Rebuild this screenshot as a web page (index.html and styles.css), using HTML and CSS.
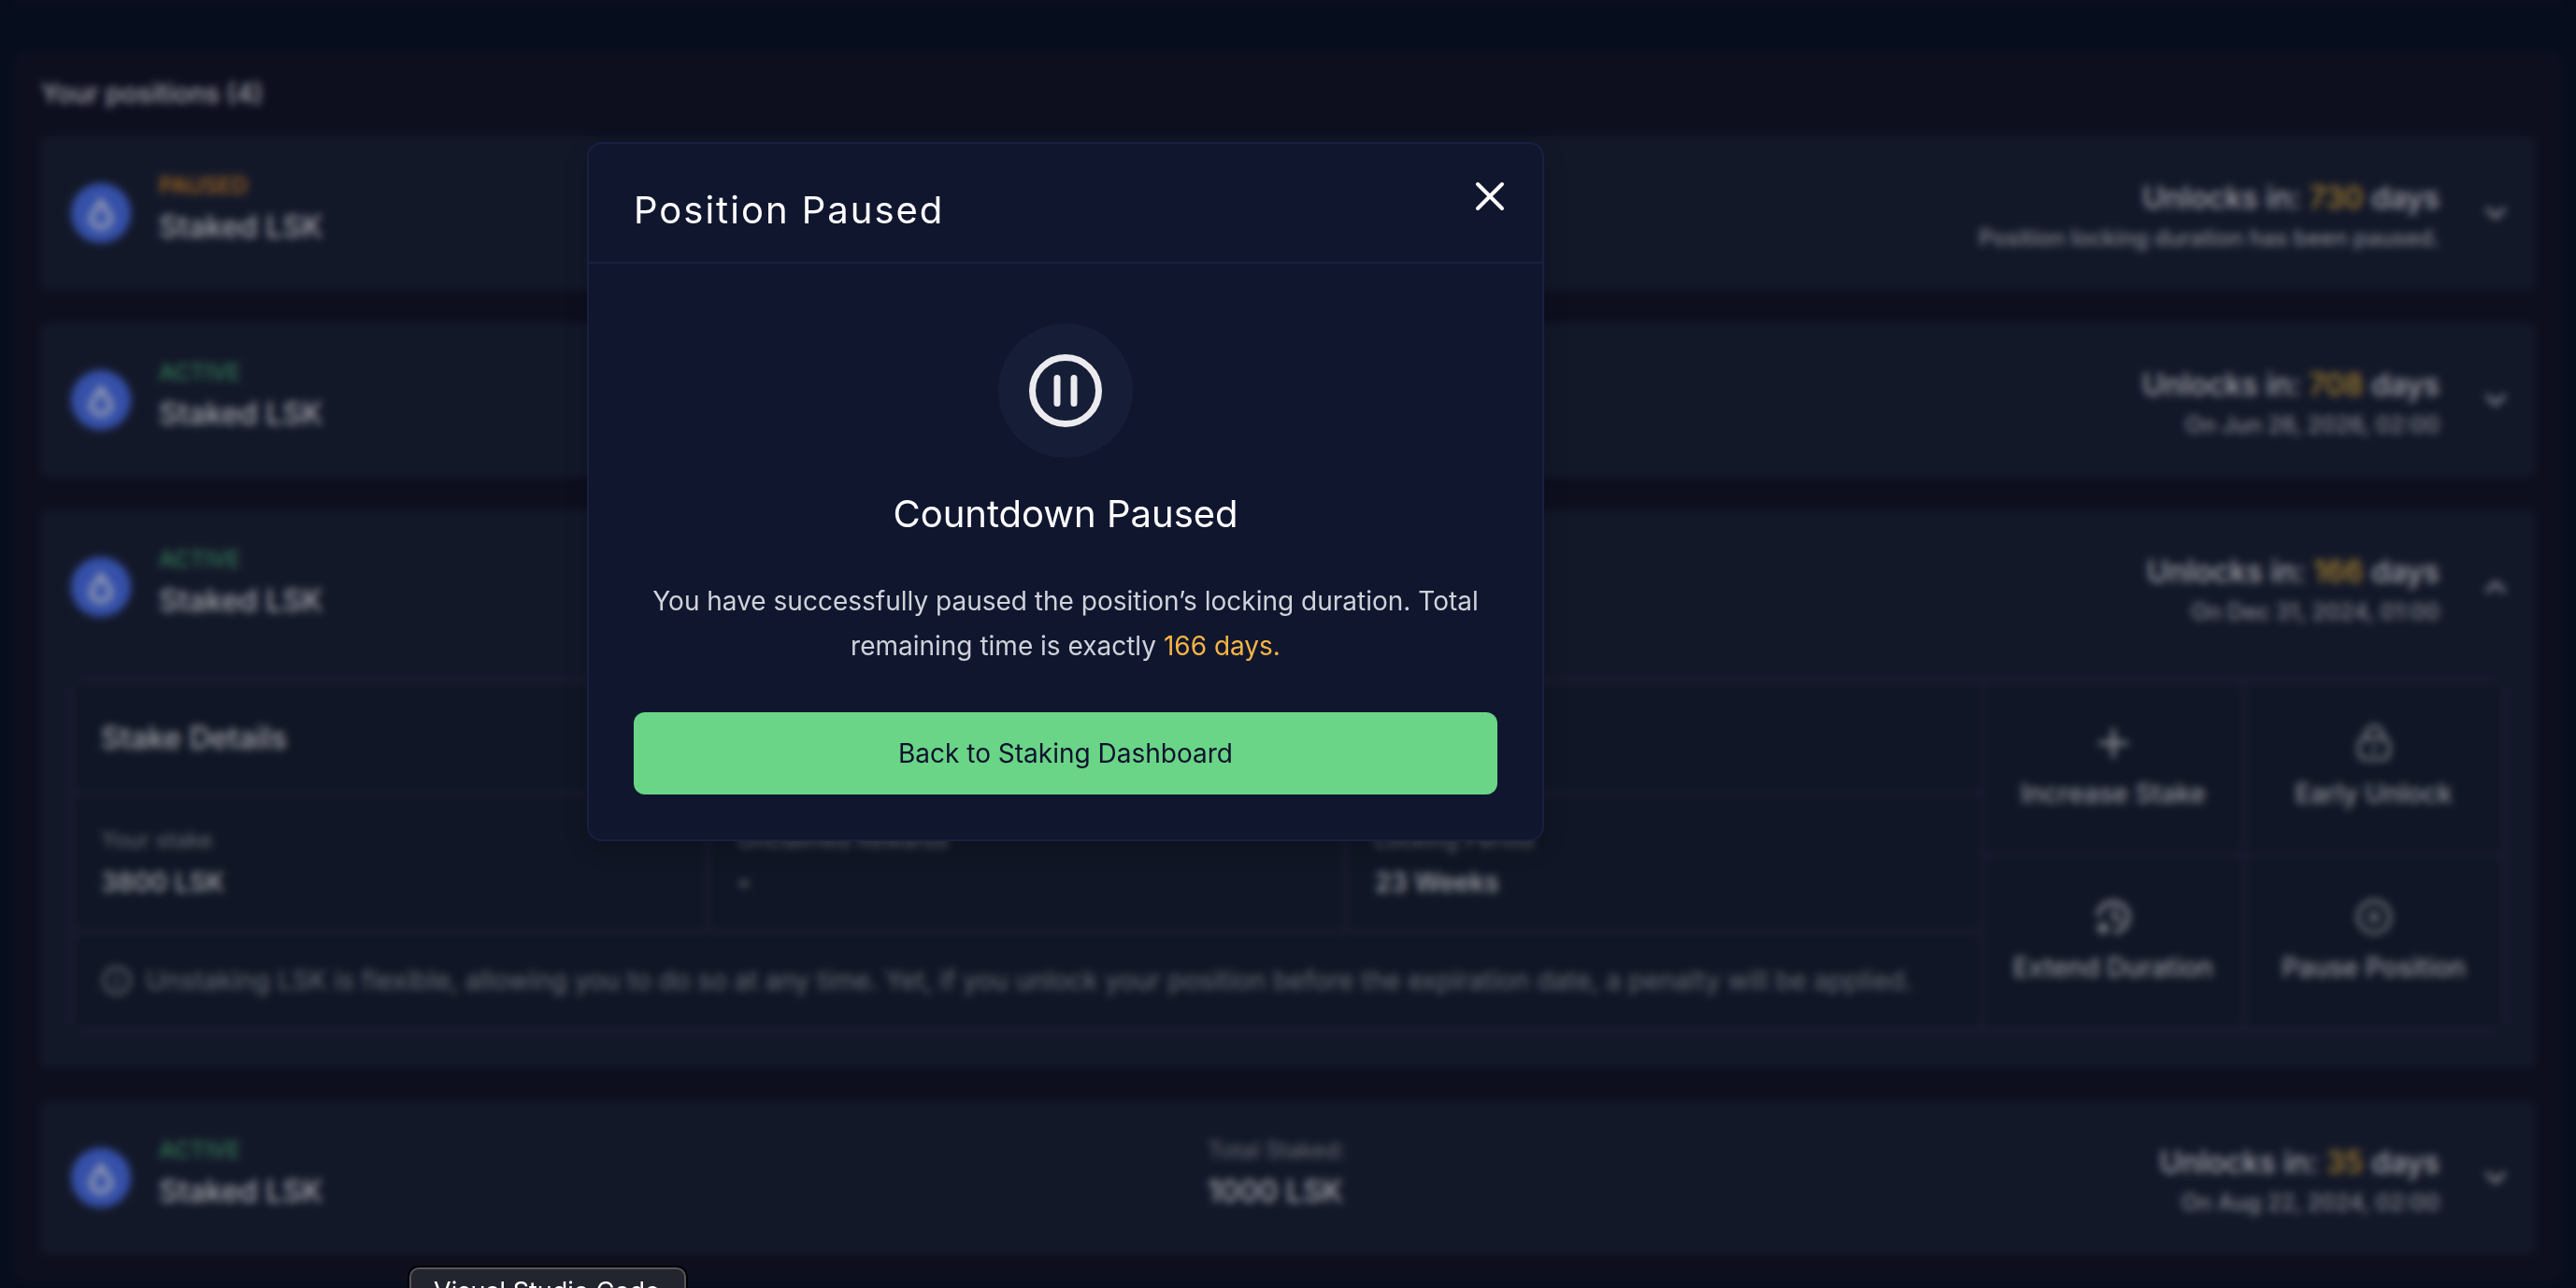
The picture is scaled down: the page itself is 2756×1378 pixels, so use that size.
FILE: index.html
```
<!DOCTYPE html>
<html lang="en">
<head>
<meta charset="utf-8">
<meta name="viewport" content="width=device-width, initial-scale=1">
<title>Staking Dashboard</title>
<link rel="stylesheet" href="styles.css">
</head>
<body>
<svg class="sprite" aria-hidden="true">
  <symbol id="drop" viewBox="0 0 66 66"><circle cx="33" cy="33" r="33" fill="#3550a8"/><path d="M33 20 L42 34 C46 41 41 48.500 33 48.500 C25 48.500 20 41 24 34 Z" fill="none" stroke="#9199b4" stroke-width="6" stroke-linejoin="round"/></symbol>
  <symbol id="chevron" viewBox="0 0 32 32"><path d="M7 11.500 L16 20.500 L25 11.500" fill="none" stroke="currentColor" stroke-width="3.500" stroke-linecap="round" stroke-linejoin="round"/></symbol>
  <symbol id="pause" viewBox="0 0 40 40"><g fill="none" stroke="currentColor" stroke-width="3" stroke-linecap="round"><circle cx="20" cy="20" r="17"/><path d="M17 15v10M23 15v10"/></g></symbol>
</svg>

<main class="page">
  <div class="previous-panel"></div>
  <section class="panel">
    <h1 class="panel-title">Your positions (4)</h1>
    <div class="cards">
      <article class="card">
        <div class="summary">
          <div class="asset"><svg class="token"><use href="#drop"/></svg>
            <div><p class="status paused">PAUSED</p><p class="name">Staked LSK</p></div></div>
          <div class="total"><p class="label">Total Staked:</p><p class="name">1000 LSK</p></div>
          <div class="unlock"><p class="unlock-in">Unlocks in: <span class="days">730</span> days</p><p class="unlock-on">Position locking duration has been paused.</p></div>
          <button class="toggle" type="button" aria-label="Expand"><svg><use href="#chevron"/></svg></button>
        </div>
      </article>
      <article class="card">
        <div class="summary">
          <div class="asset"><svg class="token"><use href="#drop"/></svg>
            <div><p class="status active">ACTIVE</p><p class="name">Staked LSK</p></div></div>
          <div class="total"><p class="label">Total Staked:</p><p class="name">1000 LSK</p></div>
          <div class="unlock"><p class="unlock-in">Unlocks in: <span class="days">708</span> days</p><p class="unlock-on">On Jun 26, 2026, 02:00</p></div>
          <button class="toggle" type="button" aria-label="Expand"><svg><use href="#chevron"/></svg></button>
        </div>
      </article>
      <article class="card expanded">
        <div class="summary">
          <div class="asset"><svg class="token"><use href="#drop"/></svg>
            <div><p class="status active">ACTIVE</p><p class="name">Staked LSK</p></div></div>
          <div class="total"><p class="label">Total Staked:</p><p class="name">3800 LSK</p></div>
          <div class="unlock"><p class="unlock-in">Unlocks in: <span class="days">166</span> days</p><p class="unlock-on">On Dec 31, 2024, 01:00</p></div>
          <button class="toggle open" type="button" aria-label="Collapse"><svg><use href="#chevron"/></svg></button>
        </div>
        <div class="details">
          <div class="facts">
            <h2 class="facts-title">Stake Details</h2>
            <div class="fact"><p class="fact-label">Your stake</p><p class="fact-value">3800 LSK</p></div>
            <div class="fact"><p class="fact-label">Unclaimed Rewards</p><p class="fact-value">-</p></div>
            <div class="fact"><p class="fact-label">Locking Period</p><p class="fact-value">23 Weeks</p></div>
            <p class="note"><svg viewBox="0 0 34 34" fill="none" stroke="currentColor" stroke-width="3" stroke-linecap="round"><circle cx="17" cy="17" r="14"/><path d="M17 16v7M17 11v1"/></svg>Unstaking LSK is flexible, allowing you to do so at any time. Yet, if you unlock your position before the expiration date, a penalty will be applied.</p>
          </div>
          <div class="actions">
            <button class="action" type="button"><svg viewBox="0 0 40 40" fill="none" stroke="currentColor" stroke-width="4" stroke-linecap="round"><path d="M20 6v28M6 20h28"/></svg>Increase Stake</button>
            <button class="action" type="button"><svg viewBox="0 0 40 40" fill="none" stroke="currentColor" stroke-width="3" stroke-linecap="round"><path d="M10 15h20a6 6 0 0 1 6 6v10a6 6 0 0 1-6 6H10a6 6 0 0 1-6-6V21a6 6 0 0 1 6-6zM11 15v-4a9 9 0 0 1 18 0v4M20 23v6"/></svg>Early Unlock</button>
            <button class="action" type="button"><svg viewBox="0 0 40 40" fill="none" stroke="currentColor" stroke-width="4" stroke-linecap="round"><path d="M4 18a16 16 0 1 1 18 18M21 12v9l6 3M9 27v10M4 32h10"/></svg>Extend Duration</button>
            <button class="action" type="button"><svg><use href="#pause"/></svg>Pause Position</button>
          </div>
        </div>
      </article>
      <article class="card">
        <div class="summary">
          <div class="asset"><svg class="token"><use href="#drop"/></svg>
            <div><p class="status active">ACTIVE</p><p class="name">Staked LSK</p></div></div>
          <div class="total"><p class="label">Total Staked:</p><p class="name">1000 LSK</p></div>
          <div class="unlock"><p class="unlock-in">Unlocks in: <span class="days">35</span> days</p><p class="unlock-on">On Aug 22, 2024, 02:00</p></div>
          <button class="toggle" type="button" aria-label="Expand"><svg><use href="#chevron"/></svg></button>
        </div>
      </article>
    </div>
  </section>
</main>

<div class="overlay">
  <div class="modal" role="dialog" aria-modal="true" aria-labelledby="modal-title">
    <header class="modal-header">
      <h2 class="modal-title" id="modal-title">Position Paused</h2>
      <button class="close" type="button" aria-label="Close"><svg viewBox="0 0 32 32" fill="none" stroke="currentColor" stroke-width="4" stroke-linecap="round"><path d="M3 3l26 26M29 3L3 29"/></svg></button>
    </header>
    <div class="modal-body">
      <div class="badge"><svg viewBox="0 0 80 80" fill="none" stroke="currentColor" stroke-width="7" stroke-linecap="round"><circle cx="40" cy="40" r="35.500"/><path d="M31 26.500v27M49 26.500v27"/></svg></div>
      <h3 class="modal-heading">Countdown Paused</h3>
      <p class="modal-text">You have successfully paused the position’s locking duration. Total remaining time is exactly <span class="highlight">166 days.</span></p>
      <button class="primary" type="button">Back to Staking Dashboard</button>
    </div>
  </div>
</div>
<div class="dock-tip" role="tooltip">Visual Studio Code</div>
</body>
</html>
```

FILE: styles.css
```
* { box-sizing: border-box; }
body, h1, h2, h3, p { margin: 0; }
body {
  background: #060d1c;
  color: #a4a5ab;
  font-family: Inter, "Liberation Sans", sans-serif;
  font-size: 28px;
  overflow: hidden;
}
button {
  border: 0;
  padding: 0;
  background: none;
  color: inherit;
  font: inherit;
  cursor: pointer;
}
svg { display: block; flex: none; }
.sprite { display: none; }

/* Dashboard */
.page { padding: 0 16px 8px; }
.previous-panel { height: 4px; margin-bottom: 52px; background: #100f20; }
.panel {
  padding: 26px;
  border: 2px solid #151526;
  border-radius: 16px;
  background: #0d0f1f;
}
.panel-title { margin-bottom: 30px; font-size: 28px; font-weight: 500; line-height: 32px; }
.cards { display: grid; gap: 36px; }
.card { padding: 0 32px; border-radius: 8px; background: #131829; }
.card.expanded { padding-bottom: 40px; }
.summary {
  display: grid;
  grid-template-columns: 1216fr 600fr 720fr 68px;
  align-items: center;
  min-height: 164px;
}
.asset { display: flex; align-items: center; gap: 30px; }
.token { width: 64px; height: 64px; }
.status, .label { font-size: 24px; line-height: 30px; }
.status { font-weight: 500; }
.paused { color: #a96a20; }
.active { color: #347a55; }
.label { color: #686b75; }
.name { font-size: 32px; font-weight: 500; line-height: 58px; }
.unlock { padding-right: 2px; text-align: right; white-space: nowrap; }
.unlock-in { font-size: 32px; font-weight: 500; line-height: 54px; }
.unlock-on { color: #858790; font-size: 24px; font-weight: 500; line-height: 32px; }
.days { color: #a6802f; }
.toggle { justify-self: end; margin-right: -6px; color: #92939a; }
.toggle svg { width: 32px; height: 32px; }
.toggle.open svg { transform: rotate(180deg); }

.details {
  display: grid;
  grid-template-columns: 2044fr 556fr;
  gap: 2px;
  margin-top: 18px;
  padding: 2px;
  border-radius: 12px;
  overflow: hidden;
  background: #271f3c;
}
.facts {
  display: grid;
  grid-template: 118px 146px 102px / repeat(3, 1fr);
  gap: 2px;
}
.facts > *, .action { background: #101625; }
.facts-title, .note { grid-column: 1 / -1; display: flex; align-items: center; padding: 0 30px; }
.facts-title { font-size: 32px; font-weight: 500; }
.fact { padding: 28px 30px; }
.fact-label { color: #686b75; font-size: 24px; line-height: 42px; }
.fact-value { font-size: 28px; font-weight: 500; line-height: 48px; }
.note { gap: 14px; color: #686b75; }
.note svg { width: 34px; height: 34px; }
.actions { display: grid; grid-template-columns: 1fr 1fr; gap: 2px; }
.action {
  display: flex;
  flex-direction: column;
  align-items: center;
  justify-content: center;
  gap: 14px;
  color: #92939a;
  font-weight: 500;
  line-height: 40px;
}
.action svg { width: 40px; height: 40px; }

/* Dialog */
.overlay {
  position: fixed;
  inset: 0;
  display: flex;
  justify-content: center;
  align-items: flex-start;
  padding: 152px 476px 0 0;
  backdrop-filter: blur(4px);
}
.modal {
  width: 1024px;
  max-width: 100%;
  border: 2px solid #192040;
  border-radius: 16px;
  background: #11162f;
  box-shadow: 0 8px 24px #00000030;
}
.modal-header {
  display: flex;
  justify-content: space-between;
  align-items: flex-start;
  padding: 47px 40px 31px 48px;
  border-bottom: 2px solid #192040;
  color: #fff;
}
.modal-title { font-size: 40px; font-weight: 400; line-height: 48px; letter-spacing: 2px; }
.close { margin-top: -7px; }
.close svg { width: 32px; height: 32px; }
.modal-body { padding: 64px 48px 48px; text-align: center; }
.badge {
  display: flex;
  align-items: center;
  justify-content: center;
  width: 144px;
  height: 144px;
  margin: 0 auto 32px;
  border-radius: 50%;
  background: #161d36;
  color: #ebebef;
}
.badge svg { width: 80px; height: 80px; }
.modal-heading { margin-bottom: 41px; color: #fff; font-size: 40px; font-weight: 400; line-height: 56px; }
.modal-text { margin-bottom: 47px; color: #cfd3da; line-height: 48px; }
.highlight { color: #f5b544; }
.primary {
  display: block;
  width: 100%;
  height: 88px;
  border-radius: 12px;
  background: #6ad587;
  color: #0f112e;
}

.dock-tip {
  position: fixed;
  left: 438px;
  bottom: -30px;
  padding: 6px 26px 6px 24px;
  border: 2px solid #55565e;
  border-radius: 10px;
  background: #22242e;
  box-shadow: 0 0 0 2px #000;
  color: #fff;
  font-size: 27px;
  line-height: 36px;
}
```
